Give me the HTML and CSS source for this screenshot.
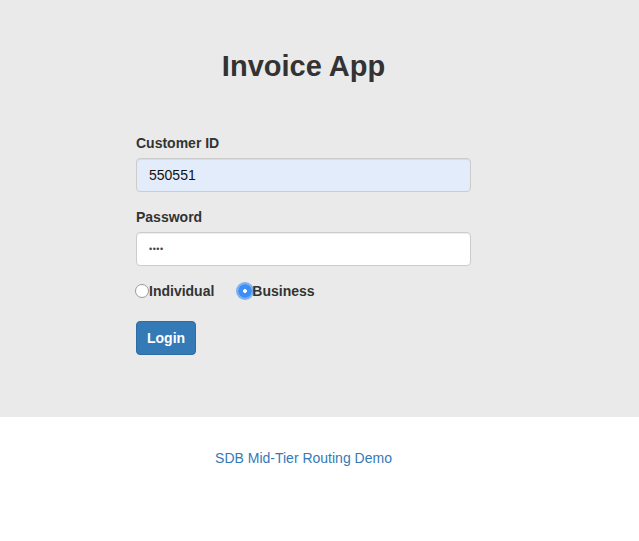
FILE: index.html
```html
<!DOCTYPE html>
<html lang="en">
<head>
<meta charset="utf-8">
<title>Invoice App</title>
<link rel="stylesheet" href="styles.css">
</head>
<body>
<section class="hero">
  <div class="column">
    <h1 class="title">Invoice App</h1>
    <form class="login-form">
      <div class="form-group">
        <label class="field-label" for="cid">Customer ID</label>
        <input class="field field-autofill" id="cid" type="text" value="550551">
      </div>
      <div class="form-group">
        <label class="field-label" for="pwd">Password</label>
        <input class="field field-password" id="pwd" type="password" value="abcd">
      </div>
      <div class="radio-row">
        <label class="radio-option"><input class="radio" type="radio" name="kind">Individual</label>
        <label class="radio-option"><input class="radio radio-focus" type="radio" name="kind" checked>Business</label>
      </div>
      <button class="btn-login" type="button">Login</button>
    </form>
  </div>
</section>
<footer class="footer">
  <div class="column footer-inner">
    <a class="footer-link" href="#">SDB Mid-Tier Routing Demo</a>
  </div>
</footer>
</body>
</html>
```
FILE: styles.css
```css
html, body {
  margin: 0;
  padding: 0;
  background: #fff;
  font-family: "Liberation Sans", Arial, Helvetica, sans-serif;
  font-size: 14px;
  line-height: 20px;
  color: #333;
}

.hero {
  background: #eaeaea;
  height: 417px;
  box-sizing: border-box;
  padding-top: 50px;
}

.column {
  width: 335px;
  margin-left: 136px;
}

.title {
  margin: 0 0 50px;
  text-align: center;
  font-size: 29px;
  line-height: 33px;
  font-weight: bold;
  color: #333;
}

.login-form {
  display: flex;
  flex-direction: column;
  align-items: flex-start;
}

.form-group {
  width: 100%;
  margin-bottom: 15px;
  display: flex;
  flex-direction: column;
}

.field-label {
  font-weight: bold;
  margin-bottom: 5px;
  color: #333;
}

.field {
  box-sizing: border-box;
  width: 100%;
  height: 34px;
  padding: 6px 12px;
  font-family: inherit;
  font-size: 14px;
  color: #111;
  background: #fff;
  border: 1px solid #ccc;
  border-radius: 4px;
  box-shadow: inset 0 1px 1px rgba(0,0,0,0.075);
  outline: none;
}

.field-password {
  font-size: 9px;
  letter-spacing: 0.5px;
  color: #444;
}

.field-autofill {
  background: #e3ecfb;
}

.radio-row {
  display: flex;
  gap: 25px;
  margin-bottom: 20px;
}

.radio-option {
  display: flex;
  align-items: center;
  font-weight: bold;
  color: #333;
  margin-left: -1px;
}

.radio {
  appearance: none;
  -webkit-appearance: none;
  box-sizing: border-box;
  width: 14px;
  height: 14px;
  margin: 0;
  border-radius: 50%;
  border: 1px solid #9a9a9a;
  background: #fff;
}

.radio-focus {
  border: none;
  background: radial-gradient(circle, #fff 0 1.6px, #3b8ff5 2.2px);
  box-shadow: 0 0 0 2px rgba(90, 155, 245, 0.75);
}

.btn-login {
  height: 34px;
  padding: 6px 10px;
  font-family: inherit;
  font-size: 14px;
  font-weight: bold;
  color: #fff;
  background: #337ab7;
  border: 1px solid #2e6da4;
  border-radius: 4px;
}

.footer {
  padding-top: 31px;
}

.footer-inner {
  text-align: center;
}

.footer-link {
  color: #337ab7;
  text-decoration: none;
}
```
